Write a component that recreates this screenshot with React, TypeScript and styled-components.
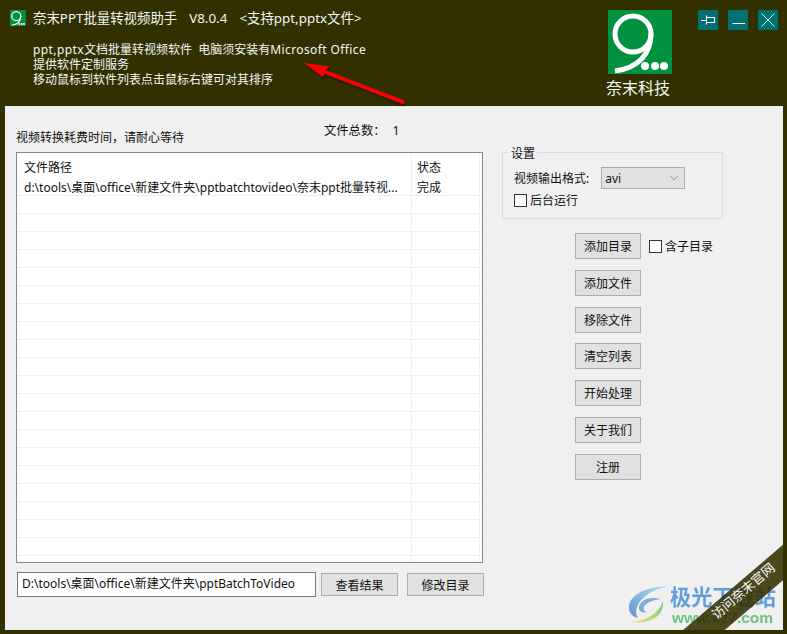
import * as React from "react";
import styled, { createGlobalStyle } from "styled-components";
import { ChevronDown } from "lucide-react";

const GlobalStyle = createGlobalStyle`
  html, body {
    margin: 0;
    padding: 0;
    background: #333000;
  }
  body {
    font-family: "Noto Sans", "Noto Sans CJK SC", sans-serif;
    font-size: 12px;
    color: #111;
  }
`;

const Logo = ({ size }: { size: number }) => (
  <svg width={size} height={size} viewBox="0 0 64 64">
    <rect width="64" height="64" fill="#009140" />
    <circle cx="25" cy="24" r="18" fill="none" stroke="#fff" strokeWidth="5" />
    <path d="M43 24C43 43 31 58 7 61" fill="none" stroke="#fff" strokeWidth="5" />
    <circle cx="37" cy="56" r="4" fill="#fff" />
    <circle cx="47" cy="56" r="4" fill="#fff" />
    <circle cx="56" cy="56" r="4" fill="#fff" />
  </svg>
);

const PinIcon = () => (
  <svg width="16" height="10" viewBox="0 0 16 10" fill="none" stroke="#fff" strokeWidth="1">
    <path d="M1 5.5H6M6.5 0.5V9.5M6.5 2.5H14.5V7.5H6.5" />
  </svg>
);

const MinIcon = () => (
  <svg width="14" height="10" viewBox="0 0 14 10" fill="none" stroke="#fff" strokeWidth="1">
    <path d="M1.5 8.5H14" />
  </svg>
);

const CloseIcon = () => (
  <svg width="14" height="14" viewBox="0 0 14 14" fill="none" stroke="#fff" strokeWidth="0.9">
    <path d="M0.5 0.5L13.5 13.5M13.5 0.5L0.5 13.5" />
  </svg>
);

const RedArrow = () => (
  <svg width="110" height="46" viewBox="0 0 110 46">
    <defs>
      <filter id="arrow-shadow" x="-10%" y="-20%" width="120%" height="150%">
        <feDropShadow dx="1" dy="2" stdDeviation="1.5" floodColor="#000" floodOpacity="0.45" />
      </filter>
    </defs>
    <g filter="url(#arrow-shadow)">
      <path d="M102 41L23 10.5" stroke="#f00" strokeWidth="3.5" strokeLinecap="round" />
      <path d="M3 2L28 5.5L24 10L22 16Z" fill="#f00" />
    </g>
  </svg>
);

const Swirl = () => (
  <svg width="42" height="42" viewBox="0 0 46 42" fill="none">
    <defs>
      <linearGradient id="swirl-top" x1="0" y1="1" x2="1" y2="0">
        <stop offset="0" stopColor="#4a86c8" />
        <stop offset="1" stopColor="#a5dcf5" />
      </linearGradient>
      <linearGradient id="swirl-bottom" x1="0" y1="1" x2="1" y2="0">
        <stop offset="0" stopColor="#eaea5a" />
        <stop offset="1" stopColor="#5cbf7a" />
      </linearGradient>
    </defs>
    <path d="M44 1C24 0 3 8 1 22C0 30 6 34 11 35C6 28 10 17 22 9C29 4 37 2 44 1Z" fill="url(#swirl-top)" />
    <path d="M36 15C26 11 14 15 12 23C11 27 15 30 20 29C17 27 16 24 19 21C23 17 30 15 36 15Z" fill="#6f9fd6" />
    <path d="M38 16C36 27 24 37 4 40C22 42 41 34 38 16Z" fill="url(#swirl-bottom)" />
  </svg>
);

const Window = styled.div`
  position: relative;
  width: 787px;
  height: 634px;
  overflow: hidden;
  display: flex;
  flex-direction: column;
  padding: 0 4px 4px 5px;
  box-sizing: border-box;
  background: #333000;
`;

const Header = styled.header`
  height: 106px;
  flex: none;
  display: flex;
  align-items: flex-start;
  color: #f2f6f6;
`;

const HeaderText = styled.div`
  width: 599px;
  padding: 10px 0 0 5px;
  box-sizing: border-box;
`;

const TitleBar = styled.div`
  display: flex;
  align-items: center;
  height: 16px;
  white-space: nowrap;
  gap: 7px;
`;

const TitleParts = styled.div`
  display: flex;
  gap: 12px;
  font-size: 13.4px;
  line-height: 14px;
`;

const Info = styled.div`
  margin: 16px 0 0 23px;
  line-height: 15px;
  white-space: nowrap;
`;

const Latin = styled.span`
  letter-spacing: 0.4px;
`;

const Brand = styled.div`
  width: 94px;
  padding-top: 10px;
  display: flex;
  flex-direction: column;
  font-size: 16px;
  line-height: 22px;
  padding-left: 4px;
  box-sizing: border-box;
  white-space: nowrap;

  svg {
    display: block;
    margin-bottom: 3px;
  }
`;

const BrandName = styled.span`
  margin-left: -2px;
`;

const WindowButtons = styled.div`
  display: flex;
  gap: 10px;
  padding-top: 10px;
`;

const WindowButton = styled.button`
  width: 20px;
  height: 20px;
  padding: 0;
  border: 0;
  background: #007070;
  display: flex;
  align-items: center;
  justify-content: center;
`;

const Panel = styled.main`
  flex: 1;
  display: grid;
  grid-template-columns: 468px 1fr;
  column-gap: 18px;
  padding-left: 11px;
  background: #f0f0f0;
`;

const LeftColumn = styled.section`
  display: flex;
  flex-direction: column;
`;

const TopRow = styled.div`
  height: 46px;
  display: flex;
  align-items: flex-end;
  white-space: nowrap;
`;

const Hint = styled.span`
  width: 308px;
  line-height: 16px;
  padding-bottom: 6px;
`;

const FileCount = styled.span`
  display: flex;
  gap: 7px;
  font-size: 12.3px;
  line-height: 16px;
  padding-bottom: 13px;
`;

const Table = styled.div`
  width: 467px;
  height: 411px;
  box-sizing: border-box;
  border: 1px solid #82878c;
  background: #fff;
  overflow: hidden;
`;

const Row = styled.div<{ $head?: boolean }>`
  display: grid;
  grid-template-columns: 395px 68px;
  height: ${(p) => (p.$head ? "24px" : "18px")};
  box-sizing: border-box;
  border-bottom: ${(p) => (p.$head ? "0" : "1px solid #f0f0f0")};

  &:nth-child(2) {
    height: 19px;
  }
`;

const Cell = styled.div<{ $head?: boolean; $status?: boolean }>`
  padding-left: ${(p) => (p.$status ? "5px" : "7px")};
  line-height: ${(p) => (p.$head ? "29px" : "22px")};
  border-right: 1px solid #f0f0f0;
  white-space: nowrap;
  overflow: hidden;
`;

const BottomRow = styled.div`
  display: flex;
  align-items: center;
  margin-top: 9px;
  padding-left: 1px;
`;

const PathInput = styled.input`
  flex: none;
  width: 299px;
  height: 25px;
  box-sizing: border-box;
  padding: 0 0 3px 4px;
  margin-right: 5px;
  border: 1px solid #7a7a7a;
  border-radius: 0;
  background: #fff;
  font: inherit;
  color: #111;
  outline: none;
`;

const Button = styled.button<{ $wide?: boolean }>`
  width: ${(p) => (p.$wide ? "77px" : "66px")};
  height: ${(p) => (p.$wide ? "23px" : "26px")};
  margin-right: ${(p) => (p.$wide ? "9px" : "0")};
  flex: none;
  padding: 0;
  border: 1px solid #adadad;
  border-radius: 0;
  background: #e1e1e1;
  font: inherit;
  color: #111;

  &:last-child {
    margin-right: 0;
  }
`;

const RightColumn = styled.aside`
  padding-top: 46px;
`;

const Settings = styled.fieldset`
  width: 221px;
  height: 67px;
  box-sizing: border-box;
  margin: 0;
  padding: 0;
  position: relative;
  border: 1px solid #dcdcdc;
`;

const Legend = styled.legend`
  position: absolute;
  top: -6px;
  left: 6px;
  padding: 0 2px;
  line-height: 14px;
  background: #f0f0f0;
`;

const SettingsBody = styled.div`
  display: flex;
  flex-direction: column;
  gap: 2px;
  padding: 14px 0 0 11px;
`;

const FormatRow = styled.div`
  display: flex;
  align-items: center;
  gap: 12px;
`;

const Select = styled.div`
  width: 84px;
  height: 22px;
  box-sizing: border-box;
  display: flex;
  align-items: center;
  justify-content: space-between;
  padding: 0 3px 0 3px;
  border: 1px solid #adadad;
  background: #e1e1e1;
  color: #111;
`;

const CheckLabel = styled.label`
  display: flex;
  align-items: center;
  gap: 3px;
  white-space: nowrap;
`;

const CheckBox = styled.input.attrs({ type: "checkbox" })`
  appearance: none;
  width: 13px;
  height: 13px;
  margin: 0;
  background: #fff;
  border: 1px solid #333;
`;

const Actions = styled.div`
  display: flex;
  flex-direction: column;
  gap: 10.8px;
  margin: 14px 0 0 73px;
`;

const ActionRow = styled.div`
  display: flex;
  align-items: center;
  gap: 8px;
`;

const ArrowOverlay = styled.div`
  position: absolute;
  left: 301px;
  top: 61px;
  line-height: 0;
`;

const Watermark = styled.div`
  position: absolute;
  left: 628px;
  top: 584px;
  display: flex;
  opacity: 0.85;
`;

const WatermarkText = styled.div`
  display: flex;
  flex-direction: column;
  white-space: nowrap;
  font-weight: 700;
`;

const WatermarkName = styled.span`
  font-size: 21.2px;
  line-height: 25px;
  color: #4a90d9;
`;

const WatermarkUrl = styled.span`
  font-family: "Liberation Sans", sans-serif;
  font-size: 15.5px;
  line-height: 17px;
  padding-left: 2px;
  color: #58b96c;
`;

const Ribbon = styled.div`
  position: absolute;
  left: 652px;
  top: 584px;
  width: 180px;
  height: 27px;
  padding-left: 10px;
  box-sizing: border-box;
  transform: rotate(-40.5deg);
  background: rgba(51, 48, 0, 0.88);
  color: #f8f8f8;
  font-size: 13px;
  line-height: 18px;
  text-align: center;
`;

const pathRows = Array.from({ length: 22 }, (_, i) => i);

export default function App() {
  return (
    <Window>
      <GlobalStyle />
      <Header>
        <HeaderText>
          <TitleBar>
            <Logo size={16} />
            <TitleParts>
              <span>奈末PPT批量转视频助手</span>
              <span>V8.0.4</span>
              <span>&lt;支持ppt,pptx文件&gt;</span>
            </TitleParts>
          </TitleBar>
          <Info>
            <div><Latin>ppt,pptx</Latin>文档批量转视频软件&nbsp;&nbsp;电脑须安装有<Latin>Microsoft Office</Latin></div>
            <div>提供软件定制服务</div>
            <div>移动鼠标到软件列表点击鼠标右键可对其排序</div>
          </Info>
        </HeaderText>
        <Brand>
          <Logo size={64} />
          <BrandName>奈末科技</BrandName>
        </Brand>
        <WindowButtons>
          <WindowButton><PinIcon /></WindowButton>
          <WindowButton><MinIcon /></WindowButton>
          <WindowButton><CloseIcon /></WindowButton>
        </WindowButtons>
      </Header>
      <Panel>
        <LeftColumn>
          <TopRow>
            <Hint>视频转换耗费时间，请耐心等待</Hint>
            <FileCount>
              <span>文件总数：</span>
              <span>1</span>
            </FileCount>
          </TopRow>
          <Table>
            <Row $head>
              <Cell $head>文件路径</Cell>
              <Cell $head $status>状态</Cell>
            </Row>
            {pathRows.map((i) => (
              <Row key={i}>
                <Cell>{i === 0 ? "d:\\tools\\桌面\\office\\新建文件夹\\pptbatchtovideo\\奈末ppt批量转视..." : ""}</Cell>
                <Cell $status>{i === 0 ? "完成" : ""}</Cell>
              </Row>
            ))}
          </Table>
          <BottomRow>
            <PathInput readOnly value="D:\tools\桌面\office\新建文件夹\pptBatchToVideo" />
            <Button $wide>查看结果</Button>
            <Button $wide>修改目录</Button>
          </BottomRow>
        </LeftColumn>
        <RightColumn>
          <Settings>
            <Legend>设置</Legend>
            <SettingsBody>
              <FormatRow>
                <span>视频输出格式:</span>
                <Select>
                  <span>avi</span>
                  <ChevronDown size={14} strokeWidth={1} color="#555" />
                </Select>
              </FormatRow>
              <CheckLabel>
                <CheckBox />
                后台运行
              </CheckLabel>
            </SettingsBody>
          </Settings>
          <Actions>
            <ActionRow>
              <Button>添加目录</Button>
              <CheckLabel>
                <CheckBox />
                含子目录
              </CheckLabel>
            </ActionRow>
            <ActionRow><Button>添加文件</Button></ActionRow>
            <ActionRow><Button>移除文件</Button></ActionRow>
            <ActionRow><Button>清空列表</Button></ActionRow>
            <ActionRow><Button>开始处理</Button></ActionRow>
            <ActionRow><Button>关于我们</Button></ActionRow>
            <ActionRow><Button>注册</Button></ActionRow>
          </Actions>
        </RightColumn>
      </Panel>
      <ArrowOverlay><RedArrow /></ArrowOverlay>
      <Watermark>
        <Swirl />
        <WatermarkText>
          <WatermarkName>极光下载站</WatermarkName>
          <WatermarkUrl>www.xz7.com</WatermarkUrl>
        </WatermarkText>
      </Watermark>
      <Ribbon>访问奈末官网</Ribbon>
    </Window>
  );
}
